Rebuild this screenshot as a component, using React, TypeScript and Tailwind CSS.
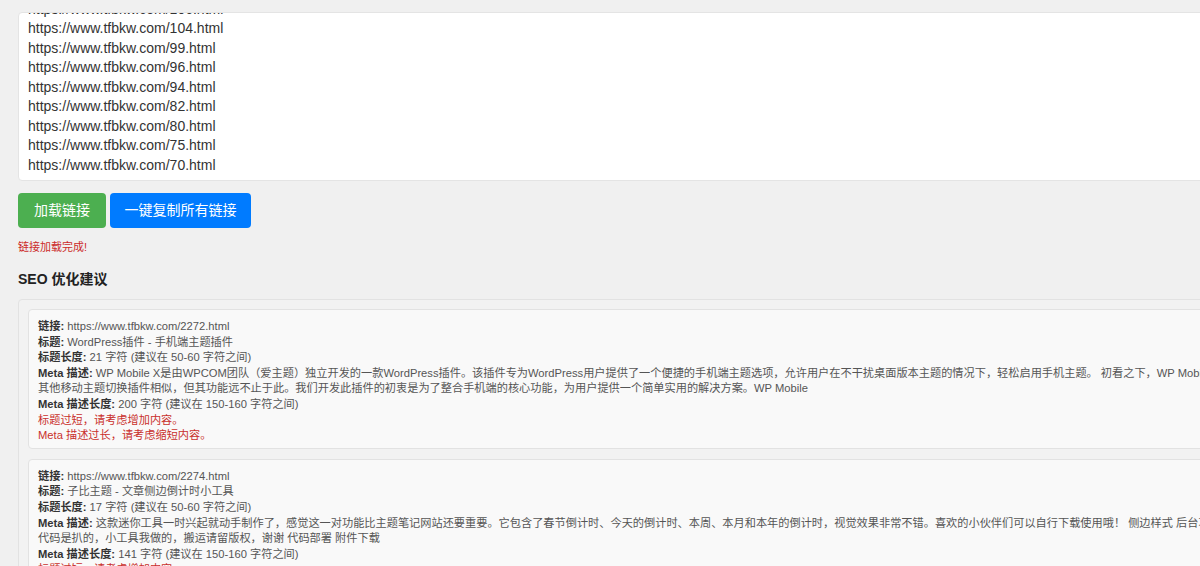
import React from 'react';

const FONT = { fontFamily: '"Liberation Sans", "Noto Sans CJK SC", sans-serif' };

const URLS = [
  'https://www.tfbkw.com/106.html',
  'https://www.tfbkw.com/104.html',
  'https://www.tfbkw.com/99.html',
  'https://www.tfbkw.com/96.html',
  'https://www.tfbkw.com/94.html',
  'https://www.tfbkw.com/82.html',
  'https://www.tfbkw.com/80.html',
  'https://www.tfbkw.com/75.html',
  'https://www.tfbkw.com/70.html',
];

interface Result {
  url: string;
  title: string;
  titleLen: number;
  meta: string[];
  metaLen: number;
  warnings: string[];
}

const RESULTS: Result[] = [
  {
    url: 'https://www.tfbkw.com/2272.html',
    title: 'WordPress插件 - 手机端主题插件',
    titleLen: 21,
    meta: [
      'WP Mobile X是由WPCOM团队（爱主题）独立开发的一款WordPress插件。该插件专为WordPress用户提供了一个便捷的手机端主题选项，允许用户在不干扰桌面版本主题的情况下，轻松启用手机主题。 初看之下，WP Mobile X可以与',
      '其他移动主题切换插件相似，但其功能远不止于此。我们开发此插件的初衷是为了整合手机端的核心功能，为用户提供一个简单实用的解决方案。WP Mobile',
    ],
    metaLen: 200,
    warnings: ['标题过短，请考虑增加内容。', 'Meta 描述过长，请考虑缩短内容。'],
  },
  {
    url: 'https://www.tfbkw.com/2274.html',
    title: '子比主题 - 文章侧边倒计时小工具',
    titleLen: 17,
    meta: [
      '这款迷你工具一时兴起就动手制作了，感觉这一对功能比主题笔记网站还要重要。它包含了春节倒计时、今天的倒计时、本周、本月和本年的倒计时，视觉效果非常不错。喜欢的小伙伴们可以自行下载使用哦！ 侧边样式 后台功能',
      '代码是扒的，小工具我做的，搬运请留版权，谢谢 代码部署 附件下载',
    ],
    metaLen: 141,
    warnings: ['标题过短，请考虑增加内容。', 'Meta 描述过短，请考虑增加内容。'],
  },
];

function ResultCard({ r }: { r: Result }) {
  return (
    <div className="rounded-[4px] border border-[#e2e2e2] bg-[#f9f9f9] px-[9px] pt-[9px] pb-[4px] text-[11.2px] leading-[15.6px] text-[#555] whitespace-nowrap">
      <div>
        <b className="text-[#333]">链接:</b> {r.url}
      </div>
      <div>
        <b className="text-[#333]">标题:</b> {r.title}
      </div>
      <div>
        <b className="text-[#333]">标题长度:</b> {r.titleLen} 字符 (建议在 50-60 字符之间)
      </div>
      <div>
        <b className="text-[#333]">Meta 描述:</b> {r.meta[0]}
      </div>
      <div>{r.meta[1]}</div>
      <div>
        <b className="text-[#333]">Meta 描述长度:</b> {r.metaLen} 字符 (建议在 150-160 字符之间)
      </div>
      {r.warnings.map((w) => (
        <div key={w} className="text-[#c9302c]">
          {w}
        </div>
      ))}
    </div>
  );
}

export default function App() {
  return (
    <div className="h-[566px] w-[1200px] overflow-hidden bg-[#f0f0f0]" style={FONT}>
      <div className="w-[1260px] pl-[18px] pt-[12px]">
        <div className="h-[169px] overflow-hidden rounded-[4px] border border-[#e4e4e4] bg-white">
          <div className="-mt-[13px] pl-[9px] text-[14px] leading-[19.45px] text-[#333]">
            {URLS.map((u) => (
              <div key={u}>{u}</div>
            ))}
          </div>
        </div>

        <div className="mt-[12px] flex gap-[4px]">
          <button
            type="button"
            className="h-[35px] w-[88px] rounded-[4px] bg-[#4caf50] text-[14px] text-white"
          >
            加载链接
          </button>
          <button
            type="button"
            className="h-[35px] w-[141px] rounded-[4px] bg-[#007bff] text-[14px] text-white"
          >
            一键复制所有链接
          </button>
        </div>

        <div className="mt-[11px] text-[11px] leading-[16px] text-[#cc2a2a]">链接加载完成!</div>

        <h3 className="mt-[14px] text-[14px] font-bold leading-[20px] text-[#222]">SEO 优化建议</h3>

        <div className="mt-[10px] flex flex-col gap-[10px] rounded-[4px] border border-[#e2e2e2] bg-[#f2f2f2] px-[9px] pt-[9px]">
          {RESULTS.map((r) => (
            <ResultCard key={r.url} r={r} />
          ))}
        </div>
      </div>
    </div>
  );
}
